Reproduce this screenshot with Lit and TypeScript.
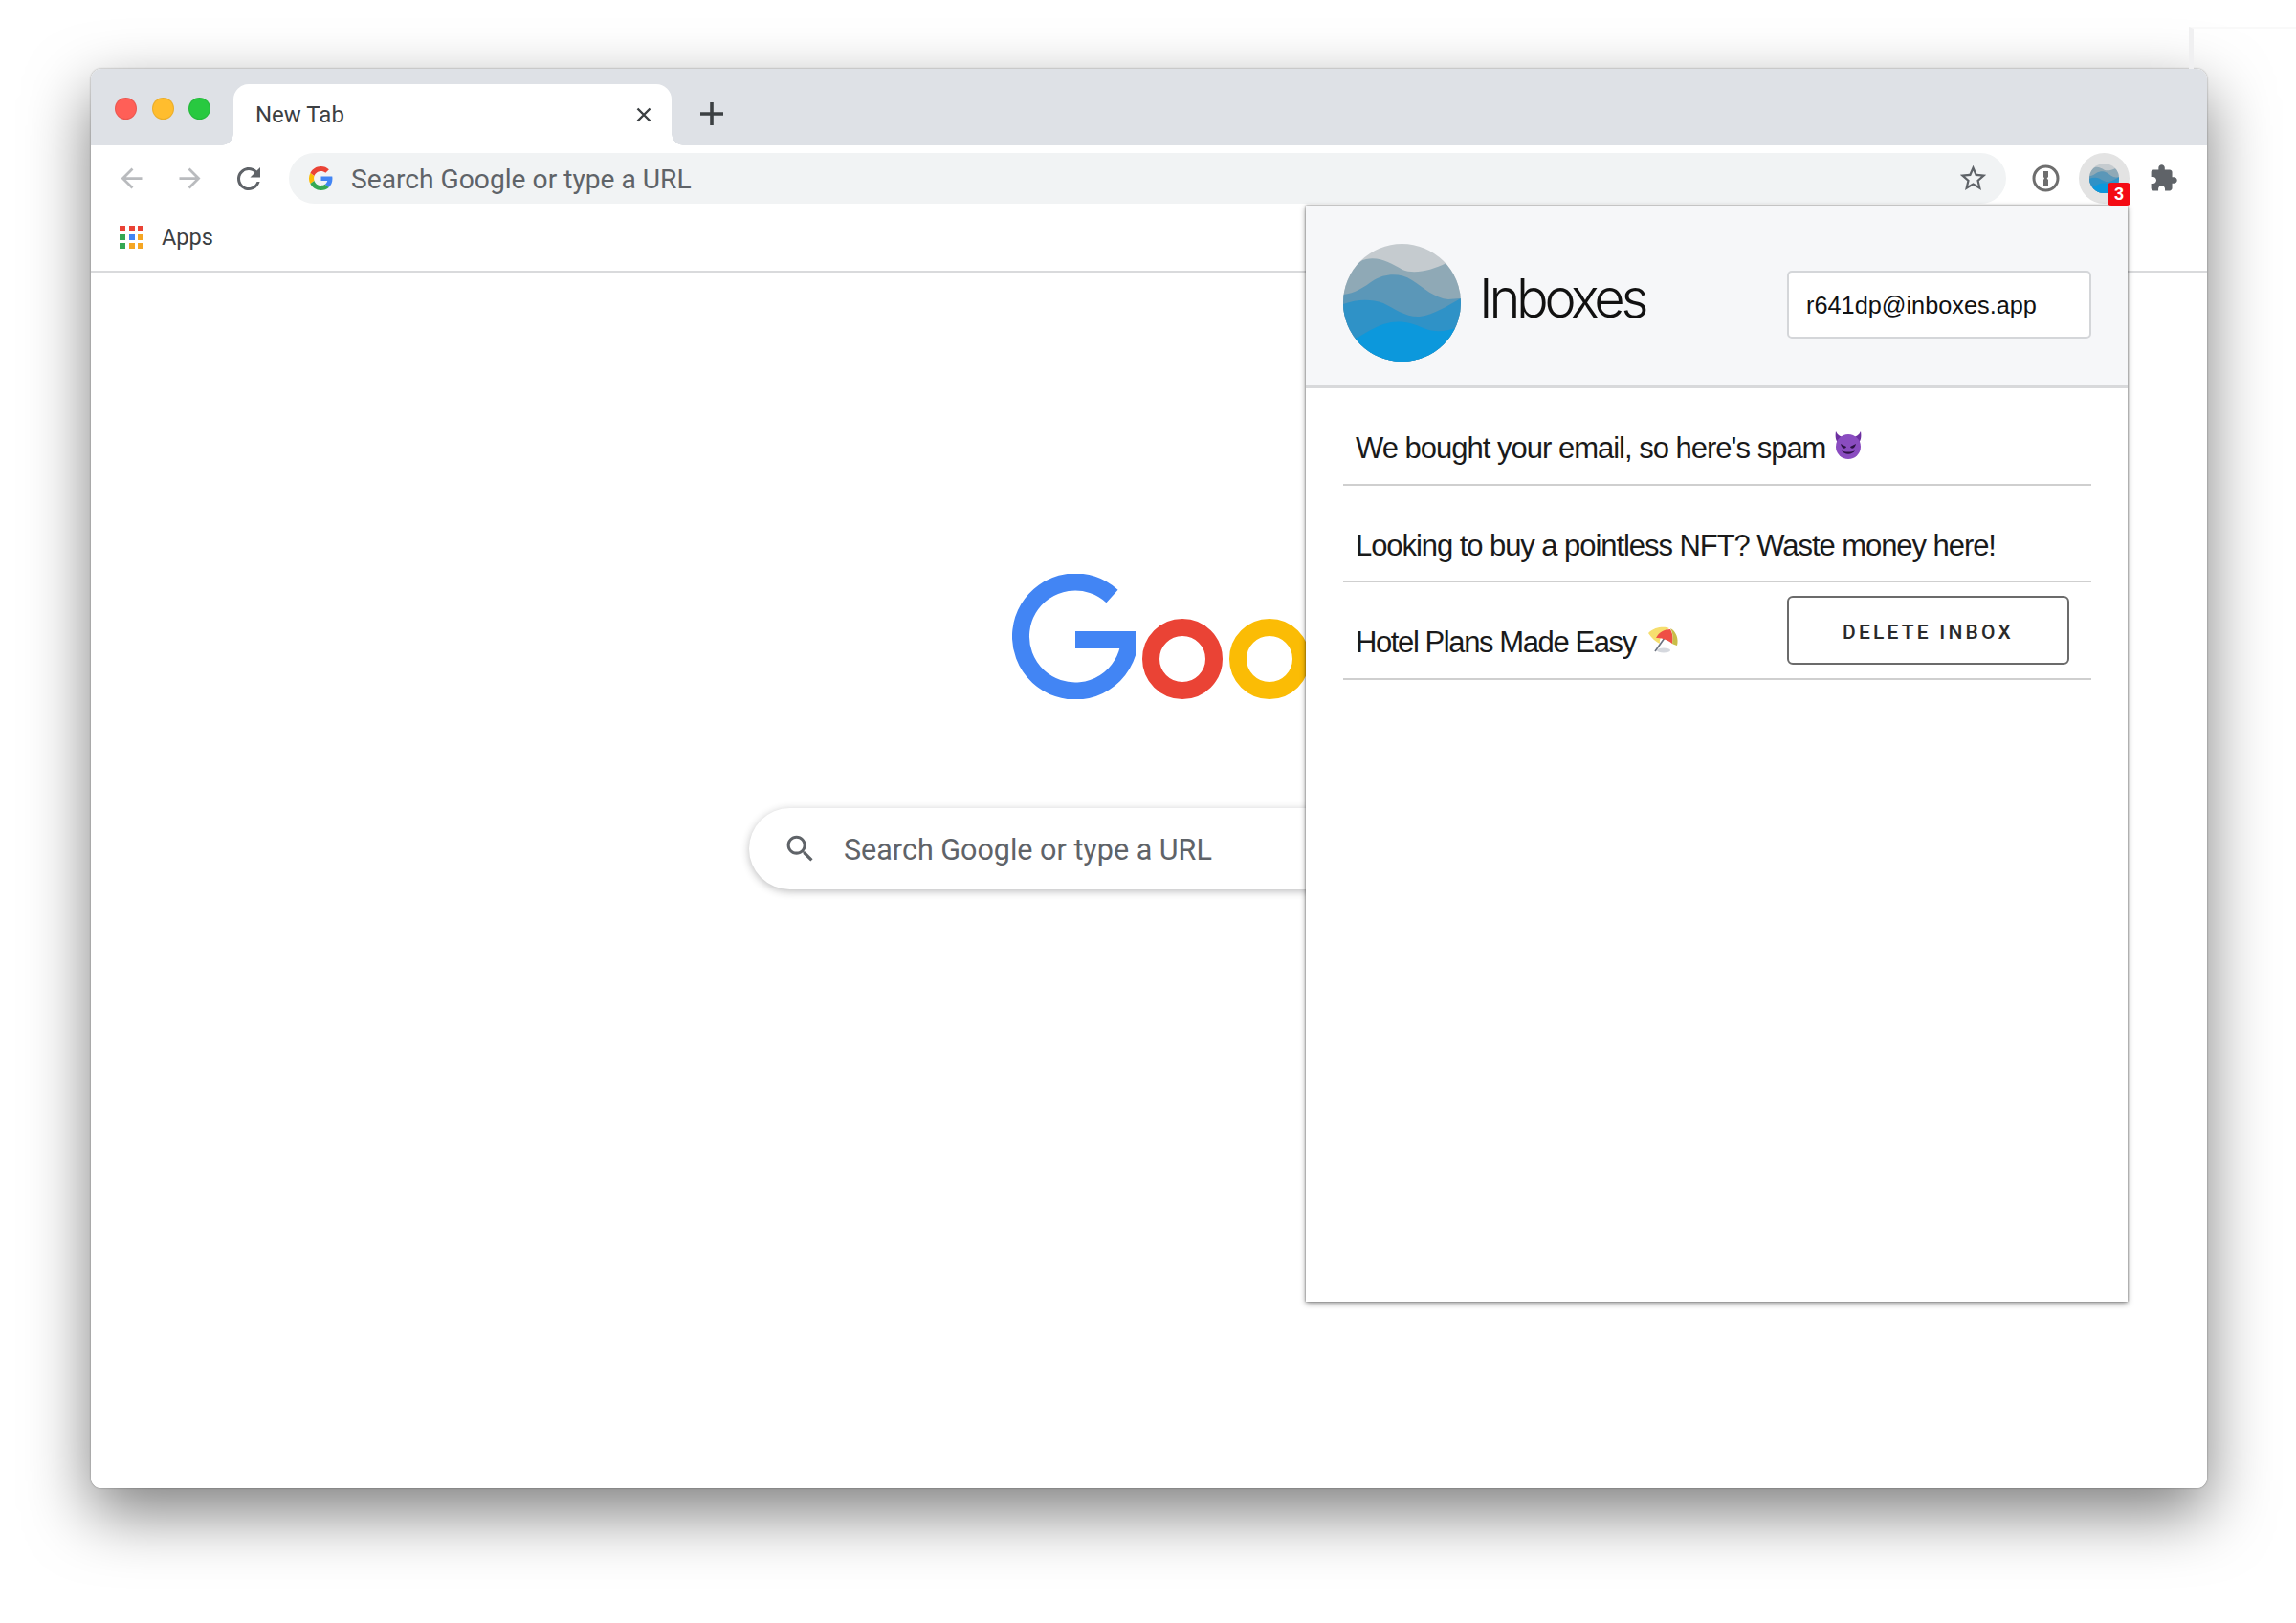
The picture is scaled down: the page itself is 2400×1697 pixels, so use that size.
import { html, css, svg, LitElement } from "lit";
import { customElement } from "lit/decorators.js";

const logo = (size: number) => html`
  <svg class="wave-logo" width=${size} height=${size} viewBox="0 0 123 123">
    <defs>
      <clipPath id="disc"><circle cx="61.5" cy="61.5" r="61.5"></circle></clipPath>
    </defs>
    <g clip-path="url(#disc)">
      <rect width="123" height="123" fill="#c5cbcf"></rect>
      <path fill="#8fa9b6" d="M0 40C8 28 14 18 24 16C38 13 50 20 62 27C74 32 92 28 108 20L123 20V123H0Z"></path>
      <path fill="#5b97b8" d="M0 53C12 52 22 45 32 38C42 32 58 29 72 38C84 46 96 57 110 58L123 57V123H0Z"></path>
      <path fill="#2f92c7" d="M0 63C14 58 28 57 42 62C54 68 66 77 80 76C96 74 110 64 123 57V123H0Z"></path>
      <path fill="#0c98dc" d="M10 100C20 96 30 88 42 84C58 79 70 82 84 88C96 93 108 92 123 86V123H0Z"></path>
    </g>
  </svg>
`;

const icon = (path: string, size: number, color: string) => html`
  <svg width=${size} height=${size} viewBox="0 0 24 24" fill=${color}>${svg`<path d=${path}></path>`}</svg>
`;

const ARROW_BACK = "M20 11H7.83l5.59-5.59L12 4l-8 8 8 8 1.41-1.41L7.83 13H20v-2z";
const ARROW_FWD = "M4 11h12.17l-5.59-5.59L12 4l8 8-8 8-1.41-1.41L16.17 13H4v-2z";
const REFRESH = "M17.65 6.35C16.2 4.9 14.21 4 12 4c-4.42 0-7.99 3.58-7.99 8s3.57 8 7.99 8c3.73 0 6.84-2.55 7.73-6h-2.08c-.82 2.33-3.04 4-5.65 4-3.31 0-6-2.69-6-6s2.69-6 6-6c1.66 0 3.14.69 4.22 1.78L13 11h7V4l-2.35 2.35z";
const STAR = "M22 9.24l-7.19-.62L12 2 9.19 8.63 2 9.24l5.46 4.73L5.82 21 12 17.27 18.18 21l-1.63-7.03L22 9.24zM12 15.4l-3.76 2.27 1-4.28-3.32-2.88 4.38-.38L12 6.1l1.71 4.04 4.38.38-3.32 2.88 1 4.28L12 15.4z";
const PUZZLE = "M20.5 11H19V7c0-1.1-.9-2-2-2h-4V3.5C13 2.12 11.88 1 10.5 1S8 2.12 8 3.5V5H4c-1.1 0-1.99.9-1.99 2v3.8H3.5c1.49 0 2.7 1.21 2.7 2.7s-1.21 2.7-2.7 2.7H2V20c0 1.1.9 2 2 2h3.8v-1.5c0-1.49 1.21-2.7 2.7-2.7 1.49 0 2.7 1.21 2.7 2.7V22H17c1.1 0 2-.9 2-2v-4h1.5c1.38 0 2.5-1.12 2.5-2.5S21.88 11 20.5 11z";
const SEARCH = "M15.5 14h-.79l-.28-.27C15.41 12.59 16 11.11 16 9.5 16 5.91 13.09 3 9.5 3S3 5.91 3 9.5 5.91 16 9.5 16c1.61 0 3.09-.59 4.23-1.57l.27.28v.79l5 4.99L20.49 19l-4.99-5zm-6 0C7.01 14 5 11.99 5 9.5S7.01 5 9.5 5 14 7.01 14 9.5 11.99 14 9.5 14z";

const googleG = html`
  <svg width="25" height="25" viewBox="0 0 48 48">
    <path fill="#EA4335" d="M24 9.5c3.54 0 6.71 1.22 9.21 3.6l6.85-6.85C35.9 2.38 30.47 0 24 0 14.62 0 6.51 5.38 2.56 13.22l7.98 6.19C12.43 13.72 17.74 9.5 24 9.5z"></path>
    <path fill="#4285F4" d="M46.98 24.55c0-1.57-.15-3.09-.38-4.55H24v9.02h12.94c-.58 2.96-2.26 5.48-4.78 7.18l7.73 6c4.51-4.18 7.09-10.36 7.09-17.65z"></path>
    <path fill="#FBBC05" d="M10.53 28.59c-.48-1.45-.76-2.99-.76-4.59s.27-3.14.76-4.59l-7.98-6.19C.92 16.46 0 20.12 0 24c0 3.88.92 7.54 2.56 10.78l7.97-6.19z"></path>
    <path fill="#34A853" d="M24 48c6.48 0 11.93-2.13 15.89-5.81l-7.73-6c-2.15 1.45-4.92 2.3-8.16 2.3-6.26 0-11.57-4.22-13.47-9.91l-7.98 6.19C6.51 42.62 14.62 48 24 48z"></path>
  </svg>
`;

const devil = html`
  <svg class="emoji" width="32" height="30" viewBox="0 0 32 30">
    <path fill="#6c2fa0" d="M3 0C2 6 3 10 6 13L12 6C8 6 5 4 3 0ZM29 0C30 6 29 10 26 13L20 6C24 6 27 4 29 0Z"></path>
    <circle cx="16" cy="16" r="13" fill="#8a4cc0"></circle>
    <path fill="#2d1245" d="M8 13L14 16C13 19 9 18 8 13ZM24 13L18 16C19 19 23 18 24 13Z"></path>
    <path fill="#2d1245" d="M9 20C12 25 20 25 23 20C20 22 12 22 9 20Z"></path>
  </svg>
`;

const umbrella = html`
  <svg class="emoji" width="34" height="30" viewBox="0 0 34 30">
    <ellipse cx="17" cy="26" rx="7" ry="2.5" fill="#d5d8de"></ellipse>
    <path stroke="#6b7280" stroke-width="1.6" d="M18 13L8 27"></path>
    <path fill="#f6de6e" d="M1 8C8 1 18 1 23 3C17 6 12 13 13 19C9 17 4 13 1 8Z"></path>
    <path fill="#ef4f45" d="M9 13C12 7 18 4 24 4C27 9 27 15 26 19C20 14 14 13 9 13Z"></path>
    <path fill="#c9bd48" d="M24 3C30 6 33 14 31 21C29 20 27 20 26 19C27 14 27 8 24 3Z"></path>
  </svg>
`;

@customElement("inbox-popup")
export class InboxPopupElement extends LitElement {
  static styles = css`
    :host {
      display: flex;
      flex-direction: column;
      height: 100%;
      background: #fff;
      font-family: "Liberation Sans", Arial, sans-serif;
      color: #1a1a1a;
    }
    .head {
      display: flex;
      align-items: center;
      height: 191px;
      padding: 15px 38px 0 39px;
      box-sizing: border-box;
      background: #f6f7f9;
      border-bottom: 3px solid #d8d9db;
      flex: none;
    }
    .title {
      margin: -10px 0 0 19px;
      font-family: Inter, sans-serif;
      font-weight: 300;
      font-size: 56px;
      letter-spacing: -4.3px;
      color: #111;
      flex: 1;
    }
    .address {
      width: 318px;
      height: 71px;
      box-sizing: border-box;
      margin-top: 4px;
      padding: 2px 0 0 18px;
      display: flex;
      align-items: center;
      background: #fff;
      border: 2px solid #d4d6d9;
      border-radius: 5px;
      font-size: 25.3px;
      color: #111;
    }
    .rows {
      padding: 0 38px 0 39px;
    }
    .row {
      display: flex;
      align-items: center;
      justify-content: space-between;
      height: 101.5px;
      box-sizing: border-box;
      border-bottom: 2px solid #cfcfcf;
      padding: 0 23px 0 13px;
    }
    .subject {
      display: flex;
      align-items: center;
      gap: 8px;
      margin-top: 27px;
      font-size: 31px;
      letter-spacing: -1px;
      white-space: nowrap;
    }
    .subject .emoji {
      margin-top: -6px;
    }
    .subject.nft {
      letter-spacing: -1.06px;
    }
    .subject.beach {
      gap: 12px;
      letter-spacing: -1.4px;
    }
    button {
      width: 295px;
      height: 72px;
      padding-top: 5px;
      background: #fff;
      border: 2px solid #6b6b6b;
      border-radius: 6px;
      font-family: Roboto, sans-serif;
      font-weight: 500;
      font-size: 21px;
      letter-spacing: 3.2px;
      color: #2a2a2a;
    }
  `;

  render() {
    return html`
      <header class="head">
        ${logo(123)}
        <div class="title">Inboxes</div>
        <div class="address">r641dp@inboxes.app</div>
      </header>
      <div class="rows">
        <div class="row">
          <div class="subject">We bought your email, so here's spam ${devil}</div>
        </div>
        <div class="row">
          <div class="subject nft">Looking to buy a pointless NFT? Waste money here!</div>
        </div>
        <div class="row">
          <div class="subject beach">Hotel Plans Made Easy ${umbrella}</div>
          <button>DELETE INBOX</button>
        </div>
      </div>
    `;
  }
}

@customElement("app-root")
export class AppRootElement extends LitElement {
  static styles = css`
    :host {
      display: block;
      background: #fff;
      font-family: Roboto, sans-serif;
    }
    .page {
      position: relative;
      height: 1697px;
      box-sizing: border-box;
      padding: 72px 93px 141px 95px;
      overflow: hidden;
    }
    /* faint remains of a second window behind, top right */
    .page::before {
      content: "";
      position: absolute;
      left: 2288px;
      top: 28px;
      width: 112px;
      height: 44px;
      border-left: 5px solid #f0f0f1;
      border-top: 2px solid #f9f9f9;
    }
    .window {
      position: relative;
      display: flex;
      flex-direction: column;
      height: 100%;
      background: #fff;
      border-radius: 11px;
      overflow: hidden;
    }
    .frame {
      height: 100%;
      border-radius: 11px;
      box-shadow: 0 0 2px rgba(0, 0, 0, 0.45), 0 26px 66px rgba(0, 0, 0, 0.5);
    }
    .strip {
      display: flex;
      align-items: flex-end;
      height: 80px;
      flex: none;
      background: #dee1e6;
    }
    .lights {
      display: flex;
      gap: 15.5px;
      align-self: flex-start;
      margin: 30px 0 0 25px;
      width: 124px;
    }
    .light {
      width: 23px;
      height: 23px;
      border-radius: 50%;
      box-sizing: border-box;
      border: 1px solid rgba(0, 0, 0, 0.08);
    }
    .red { background: #ff5f57; }
    .amber { background: #ffbd2e; }
    .green { background: #28c940; }
    .tab {
      position: relative;
      display: flex;
      align-items: center;
      justify-content: space-between;
      box-sizing: border-box;
      width: 458px;
      height: 64px;
      padding: 0 21px 0 23px;
      background: #fff;
      border-radius: 16px 16px 0 0;
      font-size: 24px;
      color: #3c4043;
    }
    .tab::before,
    .tab::after {
      content: "";
      position: absolute;
      bottom: 0;
      width: 12px;
      height: 12px;
    }
    .tab::before {
      left: -12px;
      background: radial-gradient(circle at 0 0, #dee1e6 11.5px, #fff 12px);
    }
    .tab::after {
      right: -12px;
      background: radial-gradient(circle at 100% 0, #dee1e6 11.5px, #fff 12px);
    }
    .close,
    .plus {
      display: flex;
    }
    .plus {
      margin: 0 0 21px 30px;
    }
    .toolbar {
      display: flex;
      align-items: flex-end;
      height: 61px;
      flex: none;
      padding: 0 15px 0 11.5px;
    }
    .btn {
      display: flex;
      align-items: center;
      justify-content: center;
      width: 61.5px;
      height: 53px;
      flex: none;
    }
    .omnibox {
      display: flex;
      align-items: center;
      flex: 1;
      height: 53px;
      margin: 0 11px;
      padding: 0 21px;
      background: #f1f3f4;
      border-radius: 27px;
      font-size: 28.2px;
      color: #5f6368;
    }
    .omnibox .label {
      flex: 1;
      margin: 1px 0 0 19px;
    }
    .star {
      margin-right: -3px;
      display: flex;
    }
    .ext {
      position: relative;
    }
    .ext-ring {
      display: flex;
      align-items: center;
      justify-content: center;
      width: 53px;
      height: 53px;
      background: #e3e3e3;
      border-radius: 50%;
    }
    .count {
      position: absolute;
      left: 34px;
      top: 31px;
      z-index: 3;
      display: flex;
      align-items: center;
      justify-content: center;
      width: 24px;
      height: 24px;
      background: #f40b14;
      border-radius: 4px;
      color: #fff;
      font-family: "Liberation Sans", sans-serif;
      font-size: 18px;
      font-weight: 700;
    }
    .bookmarks {
      display: flex;
      align-items: center;
      height: 72px;
      flex: none;
      box-sizing: border-box;
      padding: 0 0 0 30px;
      border-bottom: 2px solid #d9dadc;
      font-size: 23.5px;
      color: #3c4043;
    }
    .apps {
      display: grid;
      grid-template-columns: repeat(3, 6px);
      grid-auto-rows: 6px;
      gap: 3px 3.5px;
      margin-right: 19px;
    }
    .apps i {
      display: block;
    }
    .ntp {
      flex: 1;
      display: flex;
      flex-direction: column;
      align-items: center;
      padding-top: 315px;
    }
    .doodle {
      display: flex;
      gap: 7px;
      align-items: flex-end;
      width: 286px;
    }
    .doodle svg {
      flex: none;
    }
    .searchbox {
      display: flex;
      align-items: center;
      width: 836px;
      height: 85px;
      box-sizing: border-box;
      margin-top: 114px;
      padding-left: 35px;
      background: #fff;
      border-radius: 43px;
      box-shadow: 0 2px 8px rgba(32, 33, 36, 0.3);
      font-size: 30.5px;
      color: #5f6368;
    }
    .searchbox .label {
      margin: 2px 0 0 27px;
    }
    .popup {
      position: absolute;
      left: 1270px;
      top: 143px;
      width: 859px;
      height: 1146px;
      box-shadow: 0 0 2px rgba(0, 0, 0, 0.5), 0 2px 6px rgba(0, 0, 0, 0.4);
      z-index: 2;
    }
  `;

  render() {
    const apps = ["#ea4335", "#ea4335", "#ea4335", "#34a853", "#4285f4", "#f5a623", "#34a853", "#f5a623", "#f5a623"];
    return html`
      <div class="page">
        <div class="frame">
          <div class="window">
            <div class="strip">
              <div class="lights">
                <span class="light red"></span>
                <span class="light amber"></span>
                <span class="light green"></span>
              </div>
              <div class="tab">
                New Tab
                <span class="close">
                  <svg width="16" height="16" viewBox="0 0 16 16" stroke="#3c4043" stroke-width="2.4">
                    <path d="M1.5 1.5l13 13M14.5 1.5l-13 13"></path>
                  </svg>
                </span>
              </div>
              <span class="plus">
                <svg width="24" height="24" viewBox="0 0 24 24" stroke="#3c4043" stroke-width="3.6">
                  <path d="M12 0v24M0 12h24"></path>
                </svg>
              </span>
            </div>

            <div class="toolbar">
              <span class="btn">${icon(ARROW_BACK, 33, "#b9bbbe")}</span>
              <span class="btn">${icon(ARROW_FWD, 33, "#b9bbbe")}</span>
              <span class="btn">${icon(REFRESH, 36, "#5f6368")}</span>
              <div class="omnibox">
                ${googleG}
                <span class="label">Search Google or type a URL</span>
                <span class="star">${icon(STAR, 33, "#5f6368")}</span>
              </div>
              <span class="btn">
                <svg width="29" height="29" viewBox="0 0 29 29">
                  <circle cx="14.5" cy="14.5" r="12.5" fill="none" stroke="#6e6e6e" stroke-width="3"></circle>
                  <path fill="#6e6e6e" d="M12 7h5v6l-1.4 1.5L17 16v6h-5V16l1-1.5L12 13z"></path>
                </svg>
              </span>
              <span class="btn ext">
                <span class="ext-ring">${logo(31)}</span>
                <span class="count">3</span>
              </span>
              <span class="btn">${icon(PUZZLE, 31, "#5f6368")}</span>
            </div>

            <div class="bookmarks">
              <div class="apps">${apps.map((c) => html`<i style="background:${c}"></i>`)}</div>
              Apps
            </div>

            <main class="ntp">
              <div class="doodle">
                <svg width="129" height="131" viewBox="0 0 129 131">
                  <path d="M104.5 23.5A57 57 0 1 0 122.6 72" fill="none" stroke="#4285f4" stroke-width="18"></path>
                  <rect x="66" y="60" width="63" height="18" fill="#4285f4"></rect>
                </svg>
                <svg width="84" height="84" viewBox="0 0 84 84">
                  <ellipse cx="42" cy="42" rx="33" ry="33" fill="none" stroke="#ea4335" stroke-width="18"></ellipse>
                </svg>
                <svg width="84" height="84" viewBox="0 0 84 84">
                  <ellipse cx="42" cy="42" rx="33" ry="33" fill="none" stroke="#fbbc05" stroke-width="18"></ellipse>
                </svg>
              </div>
              <div class="searchbox">
                ${icon(SEARCH, 37, "#5f6368")}
                <span class="label">Search Google or type a URL</span>
              </div>
            </main>

            <inbox-popup class="popup"></inbox-popup>
          </div>
        </div>
      </div>
    `;
  }
}
